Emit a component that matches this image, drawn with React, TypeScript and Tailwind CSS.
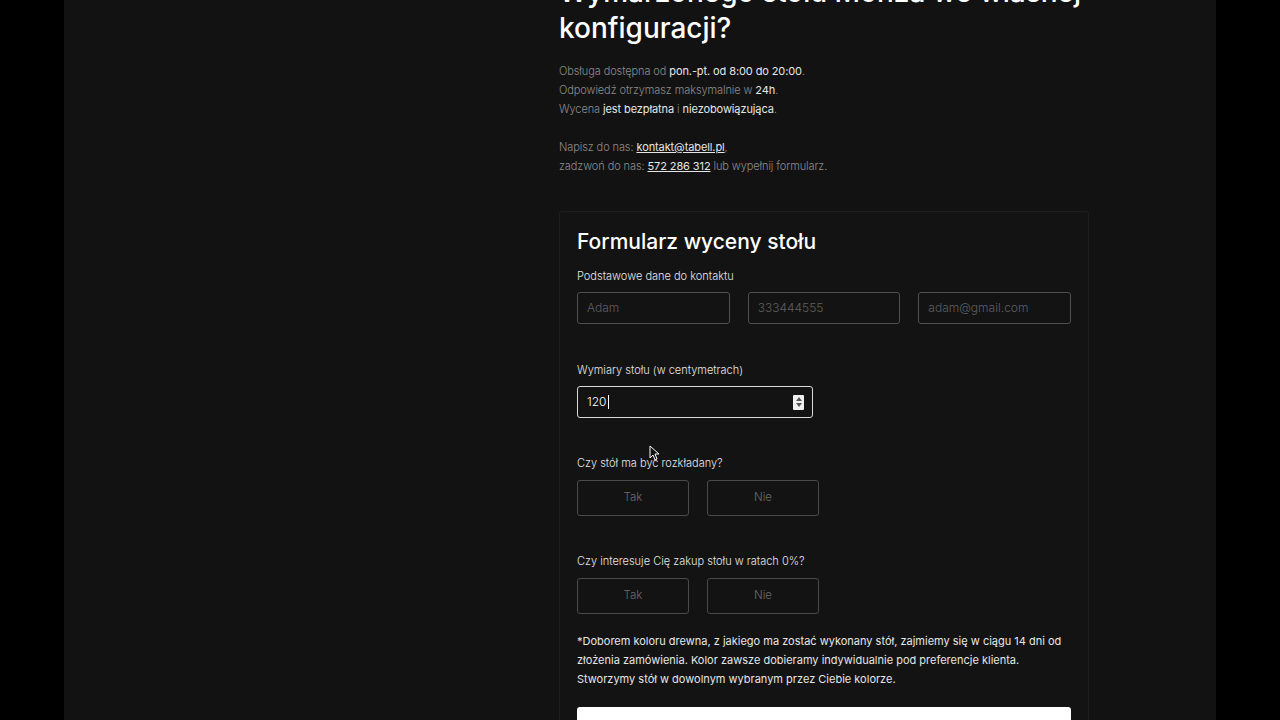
import React from 'react'

const font = { fontFamily: 'Inter, "Noto Sans", sans-serif' }

function ChoiceRow() {
  return (
    <div className="flex gap-[18px]">
      <button className="h-9 w-[112px] rounded-[3px] border border-[#4a4a4a] text-[11.5px] font-light text-[#6b6b6b]">Tak</button>
      <button className="h-9 w-[112px] rounded-[3px] border border-[#4a4a4a] text-[11.5px] font-light text-[#6b6b6b]">Nie</button>
    </div>
  )
}

export default function App() {
  return (
    <div className="h-[720px] overflow-hidden bg-black" style={font}>
      <div className="relative mx-auto h-[720px] w-[1152px] overflow-hidden bg-[#121212]">
        <div className="ml-[495px] mt-[-26px] w-[530px]">
          <h1 className="text-[28px] font-medium leading-[36px] text-white">
            Wymarzonego stołu Monza we własnej
            <br />
            konfiguracji?
          </h1>

          <p className="mt-[16px] text-[11px] font-light leading-[19px] tracking-[-0.1px] text-[#8c8c8c]">
            Obsługa dostępna od <span className="font-normal text-[#e6e6e6]">pon.-pt. od 8:00 do 20:00</span>.
            <br />
            Odpowiedź otrzymasz maksymalnie w <span className="font-normal text-[#e6e6e6]">24h</span>.
            <br />
            Wycena <span className="font-normal text-[#e6e6e6]">jest bezpłatna</span> i <span className="font-normal text-[#e6e6e6]">niezobowiązująca</span>.
            <br />
            <br />
            Napisz do nas: <span className="font-normal text-[#e6e6e6] underline">kontakt@tabell.pl</span>,
            <br />
            zadzwoń do nas: <span className="font-normal text-[#e6e6e6] underline">572 286 312</span> lub wypełnij formularz.
          </p>

          <div className="mt-[35px] rounded-[3px] border border-[#1d1d1d] bg-[#131313] px-[17px] pt-[16px] pb-8">
            <h2 className="text-[21px] font-medium leading-[28px] text-white">Formularz wyceny stołu</h2>

            <div className="mt-[12px] text-[11px] font-light leading-4 text-[#e6e6e6]">Podstawowe dane do kontaktu</div>
            <div className="mt-[8px] grid grid-cols-3 gap-[18px]">
              {['Adam', '333444555', 'adam@gmail.com'].map((p) => (
                <div
                  key={p}
                  className="flex h-8 items-center rounded-[3px] border border-[#4f4f4f] px-[9px] text-[12px] font-light text-[#5f5f5f]"
                >
                  {p}
                </div>
              ))}
            </div>

            <div className="mt-[38px] text-[11px] font-light leading-4 text-[#e6e6e6]">Wymiary stołu (w centymetrach)</div>
            <div className="mt-[8px] flex h-8 w-[236px] items-center justify-between rounded-[3px] border border-[#d9d9d9] pl-[9px] pr-[8px]">
              <div className="flex items-center text-[12px] font-light text-white">
                120
                <span className="ml-[1px] h-[14px] w-px bg-white" />
              </div>
              <div className="flex h-[15px] w-[11px] flex-col items-center justify-center gap-[2px] rounded-[1px] bg-[#f0f0f0]">
                <svg width="6" height="4" viewBox="0 0 6 4"><path d="M3 0L6 4H0z" fill="#555" /></svg>
                <svg width="6" height="4" viewBox="0 0 6 4"><path d="M0 0h6L3 4z" fill="#555" /></svg>
              </div>
            </div>

            <div className="mt-[37px] text-[11px] font-light leading-4 text-[#e6e6e6]">Czy stół ma być rozkładany?</div>
            <div className="mt-[9px]">
              <ChoiceRow />
            </div>

            <div className="mt-[37px] text-[11px] font-light leading-4 text-[#e6e6e6]">Czy interesuje Cię zakup stołu w ratach 0%?</div>
            <div className="mt-[9px]">
              <ChoiceRow />
            </div>

            <p className="mt-[18px] text-[11px] leading-[19px] text-[#e6e6e6]">
              *Doborem koloru drewna, z jakiego ma zostać wykonany stół, zajmiemy się w ciągu 14 dni od
              <br />
              złożenia zamówienia. Kolor zawsze dobieramy indywidualnie pod preferencje klienta.
              <br />
              Stworzymy stół w dowolnym wybranym przez Ciebie kolorze.
            </p>

            <button className="mt-[18px] h-10 w-full rounded-[3px] bg-white" />
          </div>
        </div>

        <svg className="absolute left-[585px] top-[445px]" width="11" height="16" viewBox="0 0 11 16">
          <path d="M1 1v12l3-3 2 5 2-1-2-5h4z" fill="#111" stroke="#fff" strokeWidth="1" strokeLinejoin="round" />
        </svg>
      </div>
    </div>
  )
}
